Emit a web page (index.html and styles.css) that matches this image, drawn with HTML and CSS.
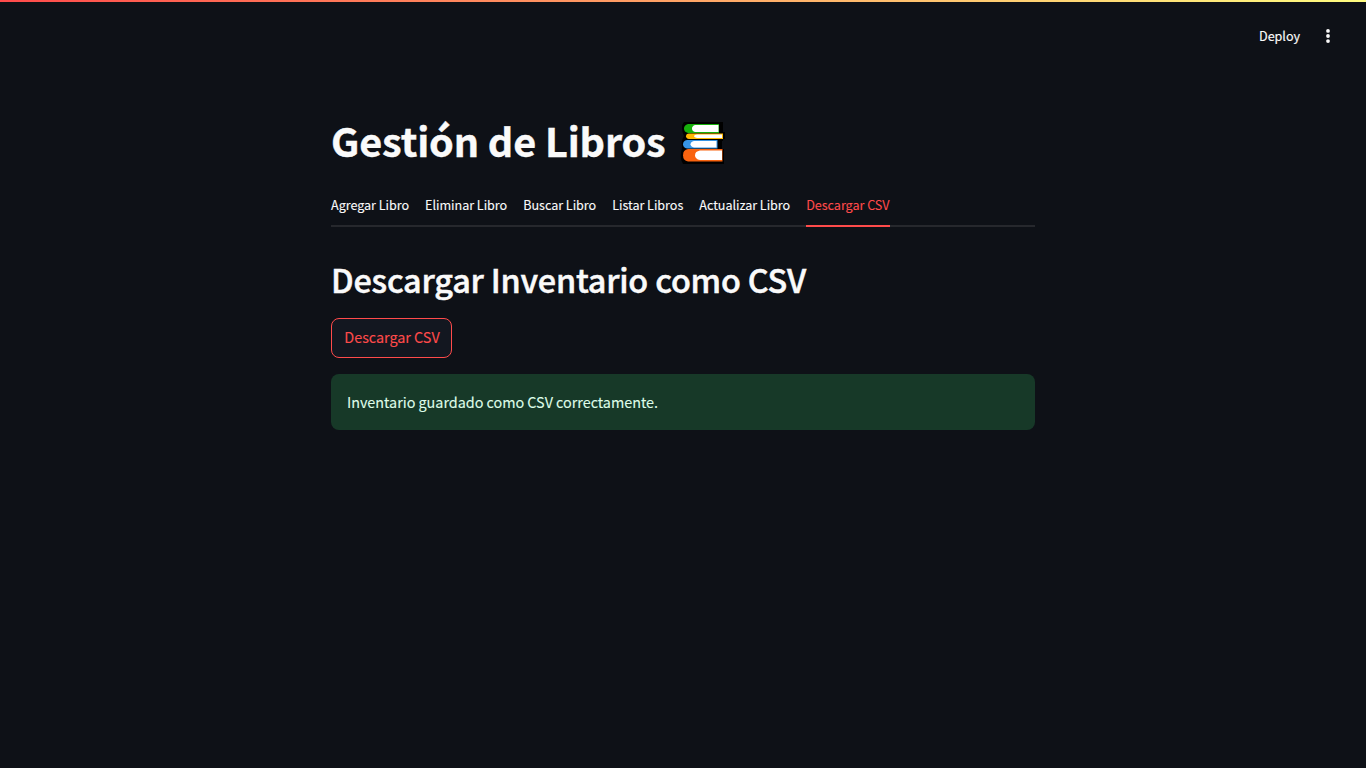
FILE: index.html
```html
<!DOCTYPE html>
<html lang="es">
<head>
<meta charset="utf-8">
<title>Gestión de Libros</title>
<link rel="stylesheet" href="styles.css">
</head>
<body>
<div class="decoration"></div>
<header class="toolbar">
  <span class="deploy">Deploy</span>
  <svg class="menu" viewBox="0 0 20 20" width="20" height="20" fill="#fafafa"><circle cx="10" cy="4.900" r="1.900"/><circle cx="10" cy="10" r="1.900"/><circle cx="10" cy="15.100" r="1.900"/></svg>
</header>
<main class="content">
  <h1 class="title"><span class="title-text">Gestión de Libros</span>
    <svg class="books" viewBox="0 0 46 46" width="46" height="46">
      <path d="M4 1H43V11H45V18H43V20H42V28H44V43H3Q0 38 1 32Q2 28 2 25Q1 20 4 15Q2 11 2 7Q2 3 4 1Z" fill="#000"/>
      <path d="M8 3H39V12H8Q4 11 4 7.500T8 3Z" fill="#16b00c"/>
      <path d="M15 4H38.500V11H15Q12 10 12 7.500T15 4Z" fill="#fff"/>
      <path d="M9 12.500H43V18H9Q6 17.500 6 15.200T9 12.500Z" fill="#ffb703"/>
      <path d="M17 13.500H42V17H17Q14 16.500 14 15.200T17 13.500Z" fill="#fff"/>
      <path d="M7 19H37.500V27.500H7Q3 26.500 3 23.200T7 19Z" fill="#3795e5"/>
      <path d="M14 20H36.500V26.500H14Q10.500 25.500 10.500 23.200T14 20Z" fill="#fff"/>
      <path d="M8 28H42.500V40.500H8Q3 39.500 3 34.200T8 28Z" fill="#f9630f"/>
      <path d="M20 29.500H42V39H20Q15 38 15 34.200T20 29.500Z" fill="#fff"/>
    </svg>
  </h1>
  <nav class="tabs">
    <span class="tab">Agregar Libro</span>
    <span class="tab">Eliminar Libro</span>
    <span class="tab">Buscar Libro</span>
    <span class="tab">Listar Libros</span>
    <span class="tab">Actualizar Libro</span>
    <span class="tab active">Descargar CSV</span>
  </nav>
  <h2 class="heading">Descargar Inventario como CSV</h2>
  <button class="download">Descargar CSV</button>
  <div class="alert">Inventario guardado como CSV correctamente.</div>
</main>
</body>
</html>
```
FILE: styles.css
```css
* { box-sizing: border-box; }
body {
  margin: 0;
  height: 768px;
  overflow: hidden;
  background: #0e1117;
  color: #fafafa;
  font-family: "Noto Sans CJK SC", sans-serif;
  font-size: 14.4px;
}
.decoration { height: 2px; background: linear-gradient(90deg, #ff4b4b, #fffd80); }
.toolbar {
  height: 68px;
  padding: 0 28px 0 0;
  display: flex;
  justify-content: flex-end;
  align-items: center;
  gap: 18px;
}
.deploy { font-size: 12.6px; padding-bottom: 2px; letter-spacing: -0.03px; -webkit-text-stroke: 0.15px currentColor; }
.menu { display: block; }
.content { width: 704px; margin: 0 auto; }
.title {
  margin: 46px 0 0;
  height: 52px;
  display: flex;
  align-items: flex-start;
  gap: 15px;
  font-size: 39.6px;
  font-weight: 700;
  line-height: 48px;
  letter-spacing: -0.13px;
  -webkit-text-stroke: 0.4px currentColor;
  white-space: nowrap;
}
.books { margin-top: 5px; }
.tabs {
  margin-top: 17px;
  height: 42px;
  display: flex;
  gap: 16px;
  border-bottom: 2px solid #26282d;
  font-size: 12.6px;
  line-height: 40px;
  letter-spacing: -0.032px;
  -webkit-text-stroke: 0.1px currentColor;
  white-space: nowrap;
}
.tab { height: 42px; }
.active { color: #ff4b4b; border-bottom: 2px solid #ff4b4b; }
.heading {
  margin: 32px 0 0;
  height: 44px;
  font-size: 32.4px;
  font-weight: 500;
  line-height: 40px;
  letter-spacing: -0.2px;
  -webkit-text-stroke: 0.5px currentColor;
  white-space: nowrap;
}
.download {
  display: block;
  margin-top: 15px;
  width: 121px;
  height: 40px;
  padding: 0 0 3px 1px;
  background: #131720;
  border: 1px solid #ff4b4b;
  border-radius: 8px;
  color: #ff4b4b;
  font: inherit;
  letter-spacing: -0.03px;
  -webkit-text-stroke: 0.1px currentColor;
  white-space: nowrap;
}
.alert {
  margin-top: 16px;
  height: 56px;
  padding: 0 16px;
  border-radius: 8px;
  background: #173928;
  color: #dffde9;
  line-height: 56px;
  letter-spacing: -0.03px;
  -webkit-text-stroke: 0.1px currentColor;
}
```
